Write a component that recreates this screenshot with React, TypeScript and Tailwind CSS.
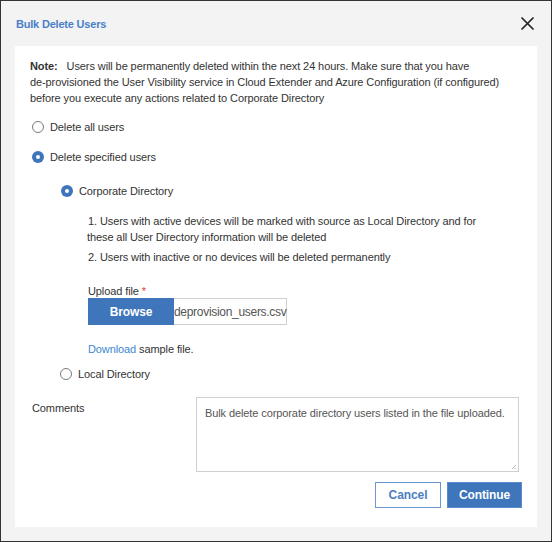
import { useState } from "react";

type RadioProps = { checked: boolean; label: string; onClick?: () => void };

function Radio({ checked, label, onClick }: RadioProps) {
  return (
    <label className="flex items-center gap-[6px] h-4 cursor-pointer" onClick={onClick}>
      {checked ? (
        <span className="w-[12px] h-[12px] rounded-full bg-[#3e75bb] flex items-center justify-center">
          <span className="w-[4px] h-[4px] rounded-full bg-white" />
        </span>
      ) : (
        <span className="w-[12px] h-[12px] rounded-full border border-[#7a7a7a] bg-white" />
      )}
      <span>{label}</span>
    </label>
  );
}

export default function App() {
  const [scope, setScope] = useState<"all" | "specified">("specified");
  const [source, setSource] = useState<"corporate" | "local">("corporate");

  return (
    <div
      className="w-[552px] h-[542px] border border-[#333] bg-[#f3f3f3] flex flex-col text-[11px] leading-4 tracking-[-0.1px] text-[#333]"
      style={{ fontFamily: '"Liberation Sans", Arial, sans-serif' }}
    >
      {/* Header */}
      <div className="h-[45px] pl-[15px] pr-[16px] pt-[1px] flex items-center justify-between">
        <h1 className="font-bold text-[#4a7fc8] text-[11px] tracking-[-0.2px]">Bulk Delete Users</h1>
        <button className="w-[13px] h-[13px] mr-[1px] mt-[-2px] flex items-center justify-center">
          <svg width="13" height="13" viewBox="0 0 13 13">
            <path d="M1 1L12 12M12 1L1 12" stroke="#222" strokeWidth="1.7" strokeLinecap="round" />
          </svg>
        </button>
      </div>

      {/* Body */}
      <div className="mx-[14px] h-[481px] bg-white pt-[12px] pl-[15px] pr-[15px] flex flex-col">
        <p>
          <span className="font-bold">Note:</span>
          <span className="ml-[9px]">Users will be permanently deleted within the next 24 hours. Make sure that you have</span>
          <br />
          de-provisioned the User Visibility service in Cloud Extender and Azure Configuration (if configured)
          <br />
          before you execute any actions related to Corporate Directory
        </p>

        <div className="mt-[13px] pl-[2px]">
          <Radio checked={scope === "all"} label="Delete all users" onClick={() => setScope("all")} />
        </div>
        <div className="mt-[14px] pl-[2px]">
          <Radio checked={scope === "specified"} label="Delete specified users" onClick={() => setScope("specified")} />
        </div>

        <div className="mt-[18px] pl-[31px]">
          <Radio checked={source === "corporate"} label="Corporate Directory" onClick={() => setSource("corporate")} />
        </div>

        <div className="pl-[57px] mt-[14px]">
          <p>
            <span className="ml-[1px]">1. Users with active devices will be marked with source as Local Directory and for</span>
            <br />
            these all User Directory information will be deleted
          </p>
          <p className="mt-[4px] ml-[1px]">2. Users with inactive or no devices will be deleted permanently</p>

          <div className="mt-[19px] leading-[14px] ml-[1px]">
            Upload file <span className="text-[#e03a3a]">*</span>
          </div>
          <div className="flex h-[27px] ml-[1px]">
            <button className="w-[86px] h-full bg-[#3e75bb] text-white font-bold text-[12px]">Browse</button>
            <div className="w-[113px] h-full border border-l-0 border-[#d0d0d0] flex items-center text-[#555] text-[12px] tracking-[-0.3px]">
              deprovision_users.csv
            </div>
          </div>
          <div className="mt-[16px] ml-[1px]">
            <a className="text-[#3b88cf]">Download</a> sample file.
          </div>
        </div>

        <div className="mt-[9px] pl-[30px]">
          <Radio checked={source === "local"} label="Local Directory" onClick={() => setSource("local")} />
        </div>

        <div className="mt-[15px] flex">
          <div className="w-[166px] mt-[3px] pl-[2px]">Comments</div>
          <div className="w-[323px] h-[75px] border border-[#d0d0d0] pl-[8px] pt-[7px] text-[#555] relative">
            Bulk delete corporate directory users listed in the file uploaded.
            <svg className="absolute right-[1px] bottom-[1px]" width="6" height="6" viewBox="0 0 6 6">
              <path d="M5 1L1 5M5 3.5L3.5 5" stroke="#aaa" strokeWidth="0.8" />
            </svg>
          </div>
        </div>

        <div className="mt-[10px] flex justify-end gap-[6px]">
          <button className="w-[66px] h-[26px] border border-[#6d97d1] bg-white text-[#4d7fc0] font-bold text-[12px]">
            Cancel
          </button>
          <button className="w-[75px] h-[26px] border border-[#5a8ad0] bg-[#3e75bb] text-white font-bold text-[12px]">
            Continue
          </button>
        </div>
      </div>
    </div>
  );
}
